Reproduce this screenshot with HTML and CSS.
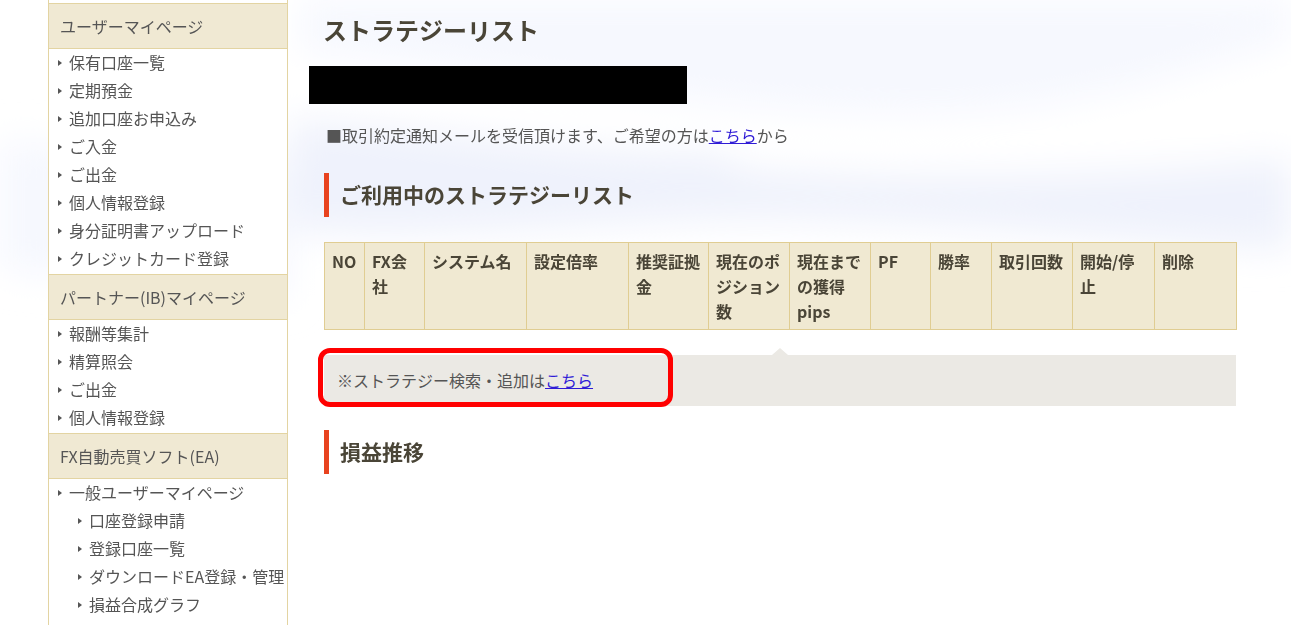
FILE: index.html
```html
<!DOCTYPE html>
<html lang="ja">

<head>
  <meta charset="UTF-8">
  <meta name="viewport" content="width=device-width, initial-scale=1.0">
  <title>ストラテジーリスト</title>
  <link rel="stylesheet" href="styles.css">
</head>

<body>

  <!-- soft wave background -->
  <svg class="backdrop" viewBox="0 0 1291 625" preserveAspectRatio="none" aria-hidden="true">
    <defs>
      <filter id="soft" x="-20%" y="-20%" width="140%" height="140%">
        <feGaussianBlur stdDeviation="18" />
      </filter>
    </defs>
    <rect width="1291" height="625" fill="#ffffff" />
    <g filter="url(#soft)">
      <path d="M300 50 C550 80 800 130 1000 110 C1120 100 1220 60 1291 40 L1291 0 L300 0 Z" fill="#f6f8fe" />
      <path d="M290 120 C450 130 600 160 760 150 C950 135 1150 130 1291 160 L1291 250 C1100 240 900 215 700 220 C550 225 420 240 290 230 Z" fill="#eff2fc" />
      <path d="M720 150 C900 125 1150 110 1291 118 L1291 158 C1100 178 900 182 740 168 Z" fill="#ffffff" />
      <path d="M0 140 C100 150 200 160 290 160 L290 300 C200 290 100 280 0 270 Z" fill="#f6f8fe" />
    </g>
  </svg>

  <div class="page">
    <aside class="sidebar">
      <div class="side-cap"></div>

      <div class="side-head">ユーザーマイページ</div>
      <ul class="side-menu">
        <li><a href="#">保有口座一覧</a></li>
        <li><a href="#">定期預金</a></li>
        <li><a href="#">追加口座お申込み</a></li>
        <li><a href="#">ご入金</a></li>
        <li><a href="#">ご出金</a></li>
        <li><a href="#">個人情報登録</a></li>
        <li><a href="#">身分証明書アップロード</a></li>
        <li><a href="#">クレジットカード登録</a></li>
      </ul>

      <div class="side-head">パートナー(IB)マイページ</div>
      <ul class="side-menu">
        <li><a href="#">報酬等集計</a></li>
        <li><a href="#">精算照会</a></li>
        <li><a href="#">ご出金</a></li>
        <li><a href="#">個人情報登録</a></li>
      </ul>

      <div class="side-head">FX自動売買ソフト(EA)</div>
      <ul class="side-menu">
        <li><a href="#">一般ユーザーマイページ</a></li>
        <li class="sub"><a href="#">口座登録申請</a></li>
        <li class="sub"><a href="#">登録口座一覧</a></li>
        <li class="sub"><a href="#">ダウンロードEA登録・管理</a></li>
        <li class="sub"><a href="#">損益合成グラフ</a></li>
      </ul>
    </aside>

    <main class="content">
      <h1 class="page-title">ストラテジーリスト</h1>
      <div class="redacted"></div>
      <p class="notice">■取引約定通知メールを受信頂けます、ご希望の方は<a href="#">こちら</a>から</p>

      <h2 class="section-title">ご利用中のストラテジーリスト</h2>
      <table class="strategy-table">
        <colgroup>
          <col style="width:40px">
          <col style="width:60px">
          <col style="width:102px">
          <col style="width:102px">
          <col style="width:80px">
          <col style="width:81px">
          <col style="width:81px">
          <col style="width:60px">
          <col style="width:61px">
          <col style="width:81px">
          <col style="width:82px">
          <col style="width:82px">
        </colgroup>
        <thead>
          <tr>
            <th>NO</th>
            <th>FX会社</th>
            <th>システム名</th>
            <th>設定倍率</th>
            <th>推奨証拠金</th>
            <th>現在のポジション数</th>
            <th>現在までの獲得pips</th>
            <th>PF</th>
            <th>勝率</th>
            <th>取引回数</th>
            <th>開始/停止</th>
            <th>削除</th>
          </tr>
        </thead>
        <tbody>
          <!-- no strategies yet -->
        </tbody>
      </table>

      <div class="search-note">
        ※ストラテジー検索・追加は<a href="#">こちら</a>
        <span class="highlight"></span>
      </div>

      <h2 class="section-title">損益推移</h2>
    </main>
  </div>

</body>

</html>
```

FILE: styles.css
```css
body {
  font-family: "Noto Sans CJK JP", "Noto Sans", sans-serif;
  color: #555;
  margin: 0;
  padding: 0;
  overflow: hidden;
}

a {
  color: #2f1bd6;
}

.backdrop {
  position: fixed;
  top: 0;
  left: 0;
  width: 100%;
  height: 100%;
  z-index: -1;
}

.page {
  display: flex;
  align-items: flex-start;
  padding-left: 48px;
}

/* sidebar */

.sidebar {
  width: 240px;
  flex-shrink: 0;
  box-sizing: border-box;
  background-color: white;
  border-left: 1px solid #e3d4a2;
  border-right: 1px solid #e3d4a2;
  min-height: 640px;
}

.side-cap {
  height: 3px;
}

.side-head {
  background-color: #f0e9d3;
  border-top: 1px solid #e3d4a2;
  border-bottom: 1px solid #e3d4a2;
  height: 44px;
  line-height: 44px;
  padding-left: 11px;
  font-size: 16px;
  color: #555;
}

.side-menu {
  list-style: none;
  margin: 0;
  padding: 0 0 1px;
}

.side-menu li {
  position: relative;
  height: 28px;
  line-height: 27px;
  padding-left: 20px;
  font-size: 16px;
  white-space: nowrap;
}

.side-menu li::before {
  content: "";
  position: absolute;
  left: 9px;
  top: 11px;
  border-left: 4px solid #555;
  border-top: 3px solid transparent;
  border-bottom: 3px solid transparent;
}

.side-menu li.sub {
  padding-left: 40px;
}

.side-menu li.sub::before {
  left: 29px;
}

.side-menu a {
  color: #555;
  text-decoration: none;
}

/* main column */

.content {
  margin-left: 36px;
  width: 912px;
}

.page-title {
  margin: 13px 0 0 -1px;
  font-size: 24px;
  line-height: 34px;
  font-weight: bold;
  color: #4a4537;
}

.redacted {
  margin: 19px 0 0 -15px;
  width: 378px;
  height: 38px;
  background-color: #000;
}

.notice {
  margin: 19px 0 0 2px;
  font-size: 16px;
  line-height: 24px;
  color: #555;
}

.section-title {
  margin: 26px 0 0;
  height: 44px;
  line-height: 42px;
  border-left: 5px solid #e8431f;
  padding-left: 11px;
  font-size: 21px;
  font-weight: bold;
  color: #4a4537;
}

.strategy-table {
  width: 912px;
  margin-top: 25px;
  border-collapse: collapse;
  table-layout: fixed;
  background-color: #f0e9d2;
}

.strategy-table th {
  border: 1px solid #e0cd92;
  padding: 6px 7px 5px;
  font-size: 16px;
  line-height: 25px;
  font-weight: bold;
  text-align: left;
  vertical-align: top;
  color: #4a4537;
}

.search-note {
  position: relative;
  margin-top: 25px;
  height: 51px;
  line-height: 51px;
  padding-left: 13px;
  background-color: #ebe9e4;
  font-size: 16px;
  color: #555;
}

.search-note::before {
  content: "";
  position: absolute;
  left: 448px;
  top: -7px;
  border-left: 8px solid transparent;
  border-right: 8px solid transparent;
  border-bottom: 7px solid #ebe9e4;
}

.highlight {
  position: absolute;
  left: -6px;
  top: -7px;
  width: 355px;
  height: 59px;
  box-sizing: border-box;
  border: 5px solid #ff0000;
  border-radius: 12px;
}

.search-note + .section-title {
  margin-top: 24px;
}
```
